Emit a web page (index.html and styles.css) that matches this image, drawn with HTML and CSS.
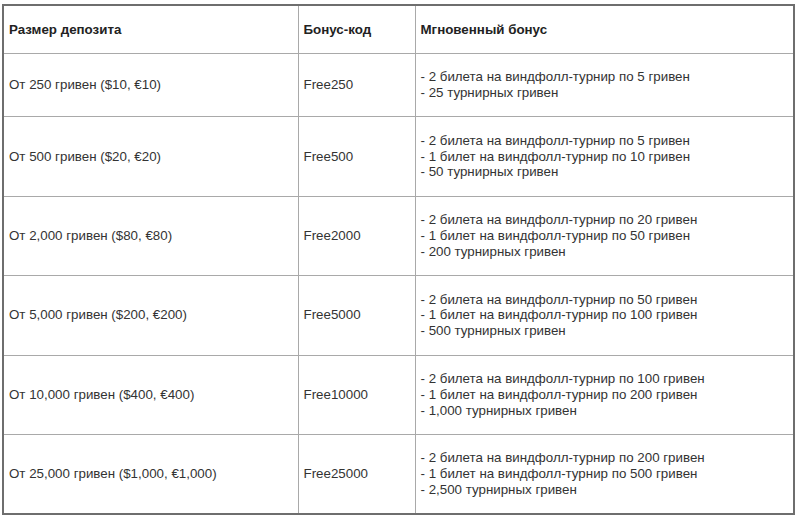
FILE: index.html
```html
<!DOCTYPE html>
<html lang="ru">
<head>
<meta charset="utf-8">
<link rel="stylesheet" href="styles.css">
</head>
<body>
<div class="wrap">
<table class="bonus">
<colgroup><col class="c1"><col class="c2"><col class="c3"></colgroup>
<thead>
<tr><th>Размер депозита</th><th>Бонус-код</th><th>Мгновенный бонус</th></tr>
</thead>
<tbody>
<tr><td>От 250 гривен ($10, €10)</td><td>Free250</td><td>- 2 билета на виндфолл-турнир по 5 гривен<br>- 25 турнирных гривен</td></tr>
<tr><td>От 500 гривен ($20, €20)</td><td>Free500</td><td>- 2 билета на виндфолл-турнир по 5 гривен<br>- 1 билет на виндфолл-турнир по 10 гривен<br>- 50 турнирных гривен</td></tr>
<tr><td>От 2,000 гривен ($80, €80)</td><td>Free2000</td><td>- 2 билета на виндфолл-турнир по 20 гривен<br>- 1 билет на виндфолл-турнир по 50 гривен<br>- 200 турнирных гривен</td></tr>
<tr><td>От 5,000 гривен ($200, €200)</td><td>Free5000</td><td>- 2 билета на виндфолл-турнир по 50 гривен<br>- 1 билет на виндфолл-турнир по 100 гривен<br>- 500 турнирных гривен</td></tr>
<tr><td>От 10,000 гривен ($400, €400)</td><td>Free10000</td><td>- 2 билета на виндфолл-турнир по 100 гривен<br>- 1 билет на виндфолл-турнир по 200 гривен<br>- 1,000 турнирных гривен</td></tr>
<tr><td>От 25,000 гривен ($1,000, €1,000)</td><td>Free25000</td><td>- 2 билета на виндфолл-турнир по 200 гривен<br>- 1 билет на виндфолл-турнир по 500 гривен<br>- 2,500 турнирных гривен</td></tr>
</tbody>
</table>
</div>
</body>
</html>
```
FILE: styles.css
```css
html, body {
  margin: 0;
  padding: 0;
  background: #fff;
}
.wrap {
  padding: 4px 0 0 2px;
}
.bonus {
  border-collapse: collapse;
  width: 791px;
  table-layout: fixed;
  border: 2px solid #6e6e6e;
  font-family: "Liberation Sans", Arial, sans-serif;
  font-size: 13.33px;
  line-height: 15.8px;
  color: #333;
}
.c1 { width: 295px; }
.c2 { width: 117px; }
.c3 { width: 379px; }
.bonus th,
.bonus td {
  border: 1px solid #a9a9a9;
  padding: 15.5px 4px 15.5px 5px;
  text-align: left;
  vertical-align: middle;
}
.bonus th {
  font-weight: bold;
  color: #222;
}
```
